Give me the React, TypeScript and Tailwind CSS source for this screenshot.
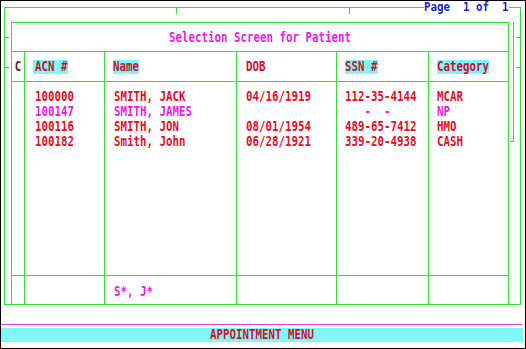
import React from "react";

const T = ({ children, className = "" }: { children: React.ReactNode; className?: string }) => (
  <span className={`inline-block scale-y-[1.22] whitespace-pre ${className}`}>{children}</span>
);

const rows = [
  { acn: "100000", name: "SMITH, JACK", dob: "04/16/1919", ssn: "112-35-4144", cat: "MCAR", c: "text-[#e0102c]" },
  { acn: "100147", name: "SMITH, JAMES", dob: "", ssn: "   -  -", cat: "NP", c: "text-[#e41ce4]" },
  { acn: "100116", name: "SMITH, JON", dob: "08/01/1954", ssn: "489-65-7412", cat: "HMO", c: "text-[#e0102c]" },
  { acn: "100182", name: "Smith, John", dob: "06/28/1921", ssn: "339-20-4938", cat: "CASH", c: "text-[#e0102c]" },
];

const cellB = "border-r border-b border-[#30e030]";
const cellR = "border-r border-[#30e030]";
const cellBo = "border-b border-[#30e030]";

export default function App() {
  return (
    <div className="relative w-[526px] h-[349px] overflow-hidden border border-black bg-white font-['DejaVu_Sans_Mono',monospace] text-[10.8px] font-bold leading-[15px]">
      {/* Page indicator over top border */}
      <div className="absolute left-[423px] top-[1px] h-[12px] leading-[12px] bg-white text-[#1c1cc8] z-10">
        <span className="inline-block scale-y-[1.12] whitespace-pre">Page  1 of  1</span>
      </div>

      <div className="relative ml-[3px] mt-[6px] w-[517px] h-[298px] border border-[#30e030]">
        {/* decorative ticks */}
        <div className="absolute left-[171px] top-0 w-px h-[6px] bg-[#30e030]" />
        <div className="absolute left-[344px] top-0 w-px h-[6px] bg-[#30e030]" />
        <div className="absolute left-0 top-[29px] w-[4px] h-px bg-[#30e030]" />
        <div className="absolute left-0 top-[59px] w-[4px] h-px bg-[#30e030]" />
        <div className="absolute left-[511px] top-[29px] w-[4px] h-px bg-[#30e030]" />
        <div className="absolute left-[511px] top-[59px] w-[4px] h-px bg-[#30e030]" />
        <div className="absolute left-[508px] top-[14px] w-px h-[119px] bg-[#30e030]" />
        <div className="absolute left-[505px] top-[133px] w-[4px] h-px bg-[#30e030]" />

        <div className="ml-[6px] mt-[14px] w-[498px] h-[282px] border-l border-t border-r border-[#30e030] flex flex-col">
          <div className={`h-[29px] ${cellBo} flex items-center justify-center text-[#e41ce4]`}>
            <T>Selection Screen for Patient</T>
          </div>
          <div className="grid grid-cols-[13px_80px_132px_100px_92px_79px] grid-rows-[30px_194px_28px]">
            {/* header */}
            <div className={`${cellB} flex items-center justify-center text-[#701838]`}>
              <T>C</T>
            </div>
            <div className={`${cellB} flex items-center pl-[8px]`}>
              <span className="inline-block h-[14px] leading-[14px] bg-[#80f8f8] text-[#c8102e] pl-[2px]">
                <T>ACN #</T>
              </span>
            </div>
            <div className={`${cellB} flex items-center pl-[8px]`}>
              <span className="inline-block h-[14px] leading-[14px] bg-[#80f8f8] text-[#c8102e]">
                <T>Name</T>
              </span>
            </div>
            <div className={`${cellB} flex items-center pl-[9px] text-[#c8102e]`}>
              <T>DOB</T>
            </div>
            <div className={`${cellB} flex items-center pl-[8px]`}>
              <span className="inline-block h-[14px] leading-[14px] bg-[#80f8f8] text-[#c8102e]">
                <T>SSN #</T>
              </span>
            </div>
            <div className={`${cellBo} flex items-center pl-[8px]`}>
              <span className="inline-block h-[14px] leading-[14px] bg-[#80f8f8] text-[#c8102e]">
                <T>Category</T>
              </span>
            </div>

            {/* body */}
            <div className={cellB} />
            <div className={`${cellB} pt-[7px] pl-[10px]`}>
              {rows.map((r) => (
                <div key={r.acn} className={`h-[15px] ${r.c}`}>
                  <T>{r.acn}</T>
                </div>
              ))}
            </div>
            <div className={`${cellB} pt-[7px] pl-[9px]`}>
              {rows.map((r) => (
                <div key={r.acn} className={`h-[15px] ${r.c}`}>
                  <T>{r.name}</T>
                </div>
              ))}
            </div>
            <div className={`${cellB} pt-[7px] pl-[9px]`}>
              {rows.map((r) => (
                <div key={r.acn} className={`h-[15px] ${r.c}`}>
                  <T>{r.dob}</T>
                </div>
              ))}
            </div>
            <div className={`${cellB} pt-[7px] pl-[8px]`}>
              {rows.map((r) => (
                <div key={r.acn} className={`h-[15px] ${r.c}`}>
                  <T>{r.ssn}</T>
                </div>
              ))}
            </div>
            <div className={`${cellBo} pt-[7px] pl-[8px]`}>
              {rows.map((r) => (
                <div key={r.acn} className={`h-[15px] ${r.c}`}>
                  <T>{r.cat}</T>
                </div>
              ))}
            </div>

            {/* footer */}
            <div className={cellR} />
            <div className={cellR} />
            <div className={`${cellR} pt-[8px] pl-[9px] text-[#e41ce4]`}>
              <T>S*, J*</T>
            </div>
            <div className={cellR} />
            <div className={cellR} />
            <div />
          </div>
        </div>
      </div>

      <div className="mt-[19px] w-[521px] h-px bg-[#e040e0]" />
      <div className="mt-[3px] w-[522px] h-[14px] leading-[14px] bg-[#80f8f8] flex items-center justify-center text-[#d0102c]">
        <T>APPOINTMENT MENU</T>
      </div>
    </div>
  );
}
